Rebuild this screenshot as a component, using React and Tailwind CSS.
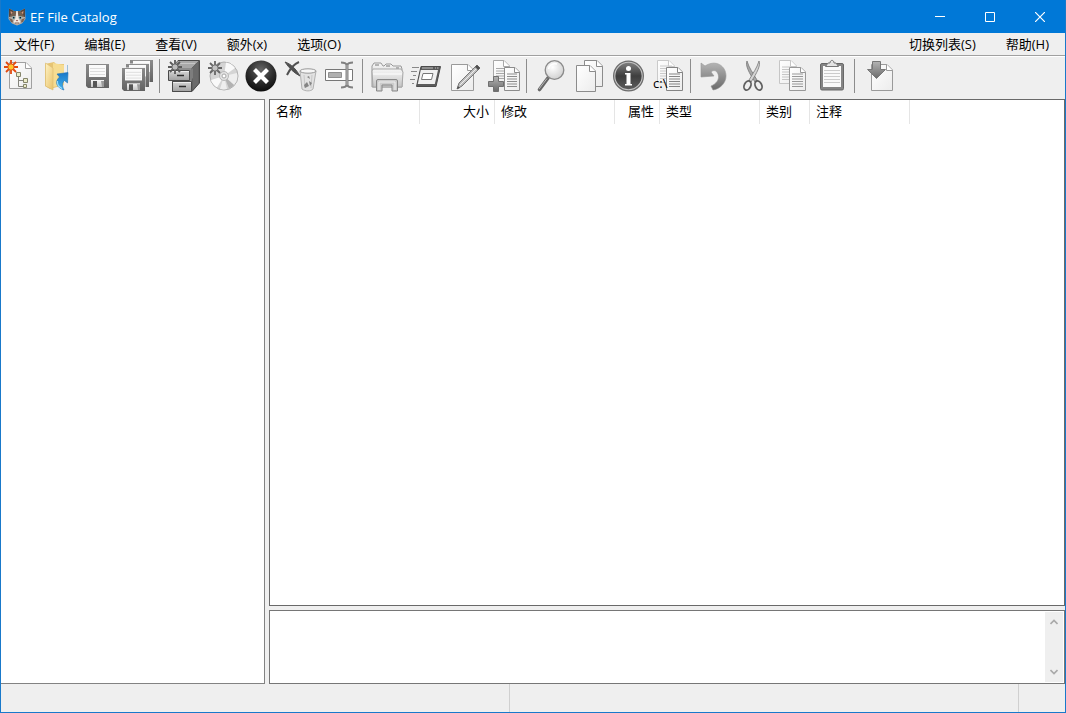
import React from "react";

const ROOT_FONT = "font-['Open_Sans','Noto_Sans_CJK_SC',sans-serif]";

function Svg({ children }) {
  return (
    <svg viewBox="0 0 32 32" className="block size-8 overflow-visible" fill="none" aria-hidden="true">
      {children}
    </svg>
  );
}

function Gradients() {
  return (
    <svg className="absolute size-0" aria-hidden="true">
      <defs>
        <linearGradient id="page" x1="0" y1="0" x2="1" y2="1">
          <stop offset="0" stopColor="#ffffff" />
          <stop offset="1" stopColor="#ececec" />
        </linearGradient>
        <linearGradient id="metal" x1="0" y1="0" x2="0" y2="1">
          <stop offset="0" stopColor="#b4b4b4" />
          <stop offset="1" stopColor="#6a6a6a" />
        </linearGradient>
        <linearGradient id="light" x1="0" y1="0" x2="0" y2="1">
          <stop offset="0" stopColor="#f6f6f6" />
          <stop offset="1" stopColor="#c4c4c4" />
        </linearGradient>
        <linearGradient id="floppy" x1="0" y1="0" x2="0" y2="1">
          <stop offset="0" stopColor="#8c8c8c" />
          <stop offset="1" stopColor="#626262" />
        </linearGradient>
        <linearGradient id="drawer" x1="0" y1="0" x2="0" y2="1">
          <stop offset="0" stopColor="#d6d6d6" />
          <stop offset="1" stopColor="#a0a0a0" />
        </linearGradient>
        <linearGradient id="folder" x1="0" y1="0" x2="1" y2="1">
          <stop offset="0" stopColor="#fff3c4" />
          <stop offset="1" stopColor="#e8c26a" />
        </linearGradient>
        <linearGradient id="blue" x1="0" y1="0" x2="0" y2="1">
          <stop offset="0" stopColor="#1a78c8" />
          <stop offset="1" stopColor="#3fb2ee" />
        </linearGradient>
        <radialGradient id="ball" cx="0.5" cy="0.3" r="0.7">
          <stop offset="0" stopColor="#666666" />
          <stop offset="0.6" stopColor="#2b2b2b" />
          <stop offset="1" stopColor="#0c0c0c" />
        </radialGradient>
        <linearGradient id="info" x1="0" y1="0" x2="0" y2="1">
          <stop offset="0" stopColor="#808080" />
          <stop offset="0.5" stopColor="#3e3e3e" />
          <stop offset="1" stopColor="#5c5c5c" />
        </linearGradient>
        <radialGradient id="lens" cx="0.4" cy="0.35" r="0.7">
          <stop offset="0" stopColor="#ffffff" />
          <stop offset="1" stopColor="#cecece" />
        </radialGradient>
      </defs>
    </svg>
  );
}

function Burst({ x, y, ray, core }) {
  return (
    <g transform={`translate(${x} ${y})`}>
      <path d="M0-7V7M-7 0H7M-5-5L5 5M-5 5L5-5" stroke={ray} strokeWidth="1.8" />
      <circle r="3.2" fill={core} stroke={ray} />
    </g>
  );
}

function Page({ x, y, w, h, fold = 5, stroke = "#8c8c8c", lines = 0 }) {
  return (
    <g transform={`translate(${x} ${y})`}>
      <path d={`M.5.5H${w - fold}L${w - 0.5} ${fold}V${h - 0.5}H.5Z`} fill="url(#page)" stroke={stroke} />
      <path d={`M${w - fold - 0.5}.5V${fold + 0.5}H${w - 0.5}`} fill="#ffffff" stroke={stroke} />
      {Array.from({ length: lines }, (_, i) => (
        <path key={i} d={`M3 ${h - 4.5 - i * 2.5}H${w - 3}`} stroke={stroke} />
      ))}
    </g>
  );
}

function Floppy({ x, y, w, h }) {
  return (
    <svg x={x} y={y} width={w} height={h} viewBox="0 0 23 24" preserveAspectRatio="none">
      <path d="M0 0H23V24H2L0 22Z" fill="url(#floppy)" />
      <path d="M3 1H20V13H3Z" fill="#fafafa" />
      <path d="M4 4.5H19M4 7.5H19M4 10.5H19" stroke="#dddddd" />
      <path d="M5 16H18V23H5Z" fill="url(#light)" />
      <path d="M7 17H11V23H7Z" fill="#555555" />
      <path d="M15 17H18V23H16Z" fill="#9a9a9a" />
    </svg>
  );
}

const icons = {
  newCatalog: (
    <Svg>
      <Page x={6} y={2} w={23} h={27} fold={6} stroke="#a0a0a0" />
      <path d="M15.500 17V26.500H21M15.500 20.500H21" stroke="#85857c" />
      <path d="M13.500 12.500h4v4h-4ZM20.500 18.500h4v4h-4ZM20.500 24.500h3v3h-3Z" fill="#ececc8" stroke="#85856a" />
      <Burst x={8} y={7} ray="#e04a10" core="#ffc62e" />
    </Svg>
  ),
  openCatalog: (
    <Svg>
      <path d="M3 4L12 2L14 4H22V25L8 29L3 26Z" fill="#e6c473" />
      <path d="M11 3L22 5V25L11 27Z" fill="#f6dc91" />
      <path d="M3.500 3L11 8V30L3.500 26Z" fill="url(#folder)" stroke="#dcbd74" strokeWidth=".7" />
      <path d="M25.500 5V14" stroke="#9dbfd8" />
      <path d="M15 14L26 12.500L25.500 23L22.500 20.500C20 23 20 26 22 30C15 28 12 22 17.500 17Z" fill="url(#blue)" stroke="#1c6fb4" strokeWidth=".6" />
      <path d="M15.500 21C15 24 17 27 20 28.500" stroke="#9addfb" strokeWidth="1.200" />
    </Svg>
  ),
  save: (
    <Svg>
      <Floppy x={5} y={4} w={23} h={24} />
    </Svg>
  ),
  saveAll: (
    <Svg>
      <Floppy x={10} y={0} w={23} h={22} />
      <path d="M5.500 3.500H29.500V26.500H5.500Z" fill="#efefef" />
      <Floppy x={6} y={4} w={23} h={23} />
      <path d="M1.500 7.500H25.500V31.500H1.500Z" fill="#efefef" />
      <Floppy x={2} y={8} w={23} h={23} />
    </Svg>
  ),
  addDrive: (
    <Svg>
      <path d="M11 0.500H32.500V23L25 31.500H5.500V8Z" fill="#8c8c8c" stroke="#4a4a4a" />
      <path d="M25 8L32 1V23L25 31Z" fill="#6a6a6a" stroke="#4a4a4a" strokeWidth=".6" />
      <path d="M11 1H31.500L24.500 8H4Z" fill="#a8a8a8" />
      <path d="M12 3.500H28" stroke="#c6c6c6" />
      <path d="M5.500 21.500H24.500V31.500H5.500Z" fill="url(#drawer)" stroke="#4a4a4a" />
      <path d="M1.500 10.500H22.500V20.500H1.500Z" fill="url(#drawer)" stroke="#4a4a4a" />
      <path d="M23 10.500L26 8V18L23 20.500Z" fill="#7d7d7d" />
      <path d="M10 15.500H17M12 26.500H19" stroke="#2c2c2c" strokeWidth="1.600" />
      <path d="M2 11.500H22M6 22.500H24" stroke="#ededed" />
      <Burst x={8} y={7} ray="#5a5a5a" core="#bcbcbc" />
    </Svg>
  ),
  addDisc: (
    <Svg>
      <circle cx="18" cy="16" r="14" fill="#d4d4d4" stroke="#b0b0b0" />
      <path d="M18 16L20 2.500A13.500 13.500 0 0 1 29 8ZM18 16L5 20A13.500 13.500 0 0 0 11 27.500Z" fill="#f9f9f9" />
      <path d="M18 16L31 13A13.500 13.500 0 0 1 28 25ZM18 16L21 29A13.500 13.500 0 0 1 14 29Z" fill="#eeeeee" />
      <path d="M18 16L28 25A13.500 13.500 0 0 1 23 28.500Z" fill="#b2b2b2" />
      <circle cx="18" cy="16" r="4.500" fill="#e2e2e2" stroke="#b8b8b8" />
      <circle cx="18" cy="16" r="2" fill="#ffffff" stroke="#a8a8a8" />
      <Burst x={9} y={8} ray="#666666" core="#c2c2c2" />
    </Svg>
  ),
  cancel: (
    <Svg>
      <circle cx="16" cy="16" r="15.500" fill="url(#ball)" />
      <path d="M9.500 9.500L22.500 22.500M22.500 9.500L9.500 22.500" stroke="#ffffff" strokeWidth="4.200" />
    </Svg>
  ),
  trash: (
    <Svg>
      <path d="M1 2C7 4 12 9 16 16C10 13 5 8 1 2Z" fill="#505050" stroke="#505050" />
      <path d="M15 2C10 4 6 9 3 15" stroke="#505050" strokeWidth="2" />
      <path d="M16 11L18 29C21 31.500 27 31.500 29 29L32 11Z" fill="#e2e2e2" stroke="#b0b0b0" />
      <ellipse cx="24" cy="11" rx="8" ry="2.200" fill="#f6f6f6" stroke="#999999" />
      <path d="M20 15L21 28M28 15L27 28" stroke="#c8c8c8" />
      <path d="M23 17l2-1 1 3zM20 25l3-3 2 4-4 2zM25 21l3 2-2 3z" fill="#848484" />
    </Svg>
  ),
  rename: (
    <Svg>
      <path d="M2.500 9.500H29.500V20.500H2.500Z" fill="#ffffff" stroke="#777777" />
      <path d="M5.500 12.500H18.500V17.500H5.500Z" fill="#b0b0b0" stroke="#909090" />
      <path d="M18 2.500C21 2.500 23 3 24 5C25 3 27 2.500 30 2.500M18 27.500C21 27.500 23 27 24 25C25 27 27 27.500 30 27.500" stroke="#808080" strokeWidth="2" />
      <path d="M24 4V26" stroke="#808080" strokeWidth="3" />
      <path d="M24 5V25" stroke="#b5b5b5" />
    </Svg>
  ),
  folders: (
    <Svg>
      <path d="M2 6L4 3H11L13 6H14L16 4H21L23 6H25L27 6H31L32 9V27H2Z" fill="url(#light)" stroke="#999999" />
      <path d="M5 5H9M16 6H20M26 8H29" stroke="#777777" />
      <path d="M2 11L3 9H31L33 12L32 27H3Z" fill="url(#light)" stroke="#a8a8a8" />
      <path d="M3 14H32" stroke="#ffffff" />
      <path d="M6.500 31V21Q6.500 19.500 8 19.500H26Q27.500 19.500 27.500 21V31H22V25H12V31Z" fill="#cccccc" stroke="#888888" />
      <path d="M9 30V22H25V30" stroke="#eeeeee" />
    </Svg>
  ),
  run: (
    <Svg>
      <path d="M12 6.500H31.500L27 26.500H7.500Z" fill="#5c5c5c" stroke="#4c4c4c" strokeLinejoin="round" />
      <path d="M11.800 10H29L25.800 24H8.800Z" fill="#f0f0f0" />
      <path d="M13 8H24M26 8H27M28 8H29.500" stroke="#c0c0c0" />
      <path d="M14 13.500H24L22.500 19.500H12.500Z" fill="#ffffff" stroke="#777777" />
      <path d="M3 7.500H10M2 11.500H8M4 15.500H7M1 19.500H6M3 23.500H5" stroke="#888888" />
    </Svg>
  ),
  edit: (
    <Svg>
      <Page x={3} y={4} w={23} h={27} fold={6} stroke="#9a9a9a" />
      <path d="M9 29L11 23L29 5L32 8L14 26Z" fill="#bdbdbd" stroke="#777777" />
      <path d="M12 25L29 8" stroke="#eeeeee" />
      <path d="M27 7L29 5L32 8L30 10ZM9 29L10 26L12 28Z" fill="#505050" />
    </Svg>
  ),
  addCopy: (
    <Svg>
      <Page x={6} y={0} w={17} h={23} fold={6} lines={5} stroke="#a8a8a8" />
      <Page x={17} y={7} w={16} h={24} fold={5} lines={6} stroke="#8c8c8c" />
      <path d="M6.500 16.500h5v5h5v5h-5v5h-5v-5h-5v-5h5Z" fill="url(#metal)" stroke="#707070" />
    </Svg>
  ),
  search: (
    <Svg>
      <path d="M5.500 29.500L14 18" stroke="#666666" strokeWidth="3.600" strokeLinecap="round" />
      <path d="M5 29L13 18.500" stroke="#b8b8b8" />
      <circle cx="20.500" cy="10" r="9.300" fill="url(#lens)" stroke="#8a8a8a" strokeWidth="1.300" />
      <path d="M14.500 9C15 5 19 3 23 4" stroke="#ffffff" strokeWidth="1.500" />
    </Svg>
  ),
  copyPages: (
    <Svg>
      <Page x={11} y={0} w={19} h={27} fold={6} />
      <Page x={3} y={5} w={20} h={27} fold={6} />
    </Svg>
  ),
  info: (
    <Svg>
      <circle cx="16.500" cy="16" r="15.500" fill="#6c6c6c" />
      <circle cx="16.500" cy="16" r="13.700" fill="url(#info)" stroke="#c4c4c4" strokeWidth="1.100" />
      <circle cx="16.500" cy="8.500" r="2.500" fill="#ffffff" />
      <path d="M13 13H18.500V24H20V25.500H13V24H14.500V14.500H13Z" fill="#ffffff" />
    </Svg>
  ),
  copyPath: (
    <Svg>
      <Page x={6} y={0} w={18} h={23} fold={6} lines={6} stroke="#cacaca" />
      <Page x={15} y={7} w={17} h={24} fold={5} lines={6} stroke="#848484" />
      <text x="2" y="28" fontSize="13" fill="#000000" className="font-['Open_Sans',sans-serif]">c:\</text>
    </Svg>
  ),
  undo: (
    <Svg>
      <path d="M3 3L7 6C18-1 28 6 28 16C28 23 22 29 15 30L13 26C18 24 21 20 20.500 16C20 11 16 9 13 12L16 16L3 17Z" fill="url(#metal)" stroke="#949494" strokeWidth=".6" />
    </Svg>
  ),
  cut: (
    <Svg>
      <path d="M10 1C8 5 12 13 18 22L20 20C16 13 12 8 10 1Z" fill="#a8a8a8" stroke="#777777" strokeWidth=".8" />
      <path d="M22 1C24 5 20 13 14 22L12 20C16 13 20 8 22 1Z" fill="#d4d4d4" stroke="#777777" strokeWidth=".8" />
      <ellipse cx="10.500" cy="25.500" rx="3.200" ry="4.800" transform="rotate(25 10.500 25.500)" stroke="#606060" strokeWidth="1.800" />
      <ellipse cx="21.500" cy="25.500" rx="3.200" ry="4.800" transform="rotate(-25 21.500 25.500)" stroke="#606060" strokeWidth="1.800" />
    </Svg>
  ),
  copy: (
    <Svg>
      <Page x={3} y={0} w={18} h={24} fold={6} lines={6} stroke="#c6c6c6" />
      <Page x={13} y={7} w={17} h={24} fold={5} lines={6} stroke="#989898" />
    </Svg>
  ),
  paste: (
    <Svg>
      <rect x="5.500" y="3.500" width="23" height="26.500" rx="1.500" fill="#858585" stroke="#686868" />
      <path d="M8 6H26V27H8Z" fill="#fafafa" />
      <path d="M9 10.500H25M9 13.500H25M9 16.500H25M9 19.500H25M9 22.500H25" stroke="#cccccc" />
      <path d="M10.500 6.500L13 3H15C15-.5 19-.5 19 3H21L23.500 6.500Z" fill="#e4e4e4" stroke="#777777" />
    </Svg>
  ),
  importFile: (
    <Svg>
      <Page x={9} y={4} w={22} h={27} fold={6} stroke="#9a9a9a" />
      <path d="M10.500 1.500H18.500V9.500H23.500L14.500 18.500L5.500 9.500H10.500Z" fill="url(#metal)" stroke="#777777" />
    </Svg>
  ),
};

const toolGroups = [
  [["newCatalog", "New catalog"], ["openCatalog", "Open catalog"], ["save", "Save"], ["saveAll", "Save all"]],
  [["addDrive", "Add drive"], ["addDisc", "Add disc"], ["cancel", "Cancel"], ["trash", "Delete"], ["rename", "Rename"]],
  [["folders", "Folders"], ["run", "Run"], ["edit", "Edit"], ["addCopy", "Add copy"]],
  [["search", "Search"], ["copyPages", "Duplicate"], ["info", "Info"], ["copyPath", "Copy path"]],
  [["undo", "Undo"], ["cut", "Cut"], ["copy", "Copy"], ["paste", "Paste"]],
  [["importFile", "Import"]],
];

const leftMenus = ["文件(F)", "编辑(E)", "查看(V)", "额外(x)", "选项(O)"];
const rightMenus = ["切换列表(S)", "帮助(H)"];

function CatLogo() {
  return (
    <svg viewBox="0 0 18 18" className="size-[18px]" aria-hidden="true">
      <path d="M1 .5L6 3H12L17 .5L17.500 11L14 15.500L9 17.500L4 15.500L.5 11Z" fill="#b9aca2" />
      <path d="M1 .5L6 3L5 8L1 9ZM17 .5L12 3L13 8L17 9Z" fill="#54463f" />
      <path d="M2.500 3L5 4.500L3 6.500ZM15.500 3L13 4.500L15 6.500Z" fill="#d99a7c" />
      <path d="M5.500 3H8.300L8 8L4 8.500L2 8ZM12.500 3H9.700L10 8L14 8.500L16 8Z" fill="#75604f" />
      <path d="M8.300 3H9.700L10.500 10L12.500 14L9 16L5.500 14L7.500 10Z" fill="#f1e9e2" />
      <path d="M1 10L4.500 11.500L5 14.500L3 14ZM17 10L13.500 11.500L13 14.500L15 14Z" fill="#7a6254" />
      <circle cx="5.700" cy="9.700" r="1.600" fill="#8fc0c4" />
      <circle cx="12.300" cy="9.700" r="1.600" fill="#8fc0c4" />
      <circle cx="5.700" cy="9.700" r=".9" fill="#16202a" />
      <circle cx="12.300" cy="9.700" r=".9" fill="#16202a" />
      <path d="M7.800 12H10.200L9 13.500Z" fill="#8f4a42" />
      <path d="M7 15H11" stroke="#7d5f52" />
    </svg>
  );
}

function TitleBar() {
  const button = "flex w-[50px] items-center justify-center";
  return (
    <header className="flex h-[33px] shrink-0 items-stretch bg-[#0078d7] text-white">
      <div className="flex flex-1 items-center gap-1 pl-[7px]">
        <CatLogo />
        <h1 className="text-[13px]">EF File Catalog</h1>
      </div>
      <button className={button} aria-label="Minimize">
        <svg viewBox="0 0 10 10" className="size-[10px]"><path d="M0 4.500H10" stroke="white" /></svg>
      </button>
      <button className={button} aria-label="Maximize">
        <svg viewBox="0 0 10 10" className="size-[10px]"><path d="M.5.5H9.500V9.500H.5Z" stroke="white" fill="none" /></svg>
      </button>
      <button className={button} aria-label="Close">
        <svg viewBox="0 0 10 10" className="size-[10px]"><path d="M0 0L10 10M10 0L0 10" stroke="white" strokeWidth="1.200" /></svg>
      </button>
    </header>
  );
}

function MenuBar() {
  return (
    <nav className="flex h-[23px] shrink-0 items-center justify-between border-b border-[#a0a0a0] pr-4 pl-[13px]">
      <div className="flex gap-[30px]">
        {leftMenus.map((m) => <button key={m} className="whitespace-nowrap">{m}</button>)}
      </div>
      <div className="flex gap-[30px]">
        {rightMenus.map((m) => <button key={m} className="whitespace-nowrap">{m}</button>)}
      </div>
    </nav>
  );
}

function Toolbar() {
  return (
    <div role="toolbar" className="flex h-[43px] shrink-0 items-center gap-[7px] border-t border-white pr-2 pb-[5px] pl-[2px]">
      {toolGroups.map((group, i) => (
        <React.Fragment key={i}>
          {i > 0 && <div className="h-[34px] w-px shrink-0 bg-[#8c8c8c]" />}
          {group.map(([icon, label]) => (
            <button key={icon} aria-label={label} className="size-8 shrink-0">{icons[icon]}</button>
          ))}
        </React.Fragment>
      ))}
    </div>
  );
}

function Column({ width, right, children }) {
  return (
    <th scope="col" className={`${width} border-r border-[#e5e5e5] pb-[2px] font-normal ${right ? "pr-[5px] text-right" : "pl-[6px] text-left"}`}>
      {children}
    </th>
  );
}

function FileList() {
  return (
    <div className="min-h-0 flex-1 overflow-hidden border border-[#696969] bg-white">
      <table className="table-fixed border-separate border-spacing-0">
        <thead>
          <tr className="h-6">
            <Column width="w-[150px]">名称</Column>
            <Column width="w-[75px]" right>大小</Column>
            <Column width="w-[120px]">修改</Column>
            <Column width="w-[45px]" right>属性</Column>
            <Column width="w-[100px]">类型</Column>
            <Column width="w-[50px]">类别</Column>
            <Column width="w-[100px]">注释</Column>
          </tr>
        </thead>
        <tbody />
      </table>
    </div>
  );
}

function CommentBox() {
  const arrow = "flex h-5 items-center justify-center";
  return (
    <div className="flex h-[74px] shrink-0 border border-[#767676] bg-white py-px pr-px">
      <textarea aria-label="注释" className="min-w-0 flex-1 resize-none overflow-hidden px-1 outline-none" />
      <div className="flex w-[18px] flex-col justify-between bg-[#efefef]">
        <button aria-label="Scroll up" className={arrow}>
          <svg viewBox="0 0 8 6" className="h-[6px] w-2"><path d="M.5 5L4 1.500L7.500 5" stroke="#a9a9a9" strokeWidth="1.600" fill="none" /></svg>
        </button>
        <button aria-label="Scroll down" className={arrow}>
          <svg viewBox="0 0 8 6" className="h-[6px] w-2"><path d="M.5 1L4 4.500L7.500 1" stroke="#a9a9a9" strokeWidth="1.600" fill="none" /></svg>
        </button>
      </div>
    </div>
  );
}

export default function App() {
  return (
    <div className={`flex h-screen flex-col border-x border-b border-[#1979ca] bg-[#efefef] text-[13px] leading-5 text-black ${ROOT_FONT}`}>
      <Gradients />
      <TitleBar />
      <MenuBar />
      <Toolbar />
      <main className="flex min-h-0 flex-1 gap-1">
        <aside className="w-[264px] shrink-0 border border-l-0 border-[#828282] bg-white" />
        <section className="flex min-w-0 flex-1 flex-col gap-1">
          <FileList />
          <CommentBox />
        </section>
      </main>
      <footer className="flex h-7 shrink-0">
        <div className="flex-1 border-r border-[#d0d0d0]" />
        <div className="flex-1 border-r border-[#d0d0d0]" />
        <div className="w-[46px]" />
      </footer>
    </div>
  );
}
